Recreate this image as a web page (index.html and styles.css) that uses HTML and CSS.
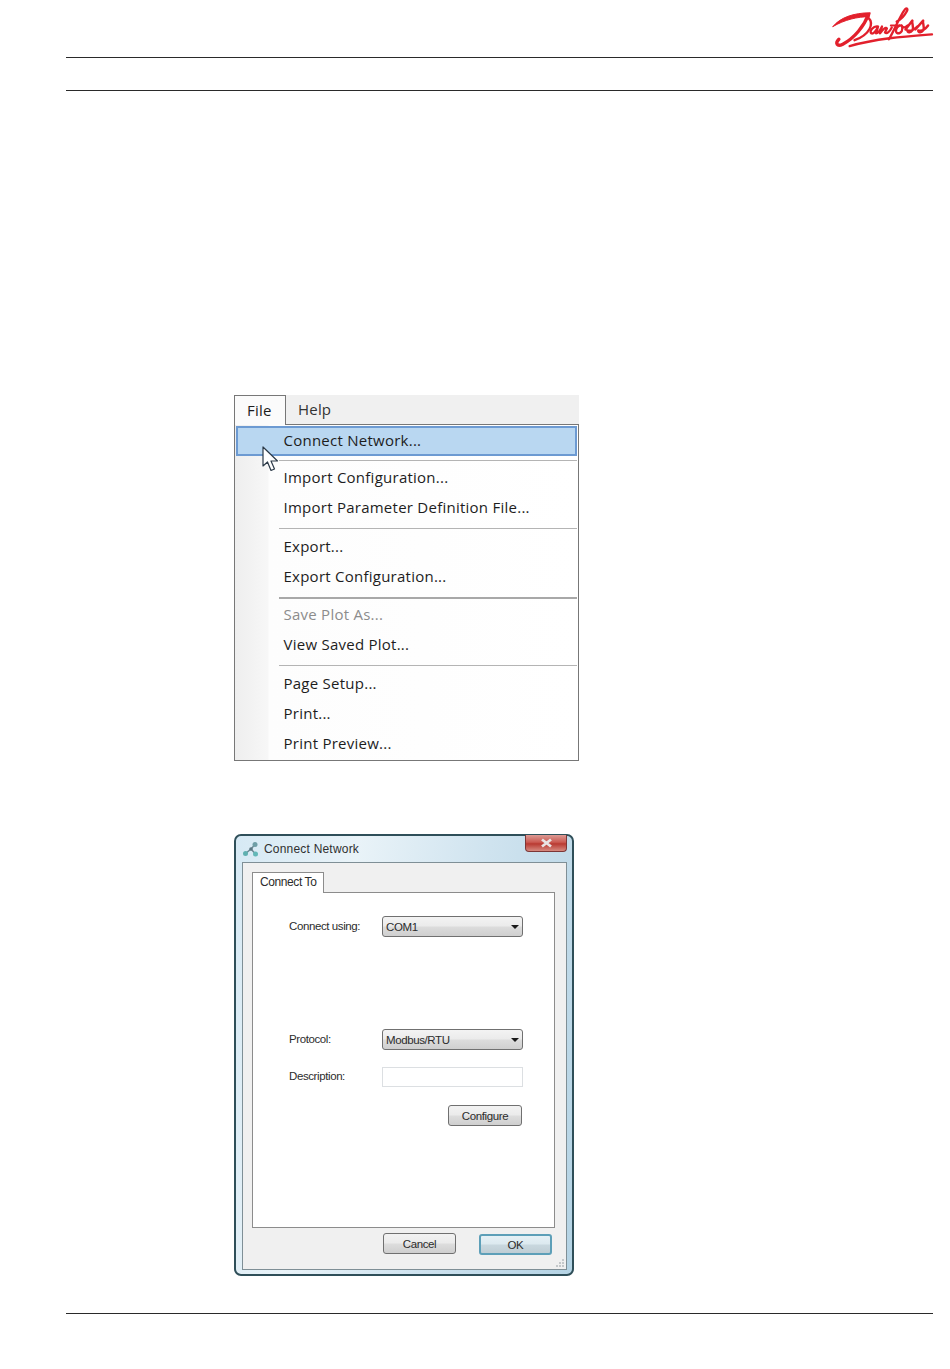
FILE: index.html
```html
<!DOCTYPE html>
<html lang="en">
<head>
<meta charset="utf-8">
<title>Connect Network</title>
<link rel="stylesheet" href="styles.css">
</head>
<body>
<div class="page">
  <header class="head">
    <svg class="logo" width="108" height="49" viewBox="0 0 110 50" fill="none" stroke="#e2202c" stroke-linecap="round" stroke-linejoin="round" role="img" aria-label="Danfoss logo">
      <path d="M5 25C12 16 26 11 43 11L42 15C30 15 17 18 5 25Z" fill="#e2202c" stroke-width="1"/>
      <path d="M41 13C37 24 27 37 15 43C9 46 7 42 11 38" stroke-width="3.400"/>
      <path d="M41 16C47 22 43 33 27 39" stroke-width="2.400"/>
      <path d="M22 45C50 37 80 35 106 33" stroke-width="2.400"/>
      <path d="M51 25C46 24 42 30 44 32C46 33 49 30 51 25L49 32C51 32 53 29 55 25L53 32C56 28 59 25 60 27L58 31C60 33 63 30 65 26" stroke-width="2.300"/>
      <path d="M62 38C67 30 73 15 78 8C80 5 82 7 80 10C78 14 74 18 70 20" stroke-width="2.400"/>
      <path d="M64 24H75" stroke-width="2"/>
      <path d="M73 24C69 26 68 31 71 32C75 32 77 28 75 24C77 27 79 26 81 24" stroke-width="2.300"/>
      <path d="M79 28L86 19C85 22 88 25 86 29C84 32 81 31 81 29C84 30 88 28 91 25" stroke-width="2.500"/>
      <path d="M89 28L97 19C96 22 99 25 97 29C95 32 92 31 92 29C95 30 99 28 102 24" stroke-width="2.500"/>
    </svg>
  </header>
  <div class="band"></div>

  <section class="menu-shot">
    <div class="menubar">
      <span class="menubar-file">File</span>
      <span class="menubar-help">Help</span>
    </div>
    <div class="menu-body">
      <div class="item item-active">Connect Network...</div>
      <div class="sep sep-first"></div>
      <div class="item">Import Configuration...</div>
      <div class="item">Import Parameter Definition File...</div>
      <div class="sep"></div>
      <div class="item">Export...</div>
      <div class="item">Export Configuration...</div>
      <div class="sep sep-strong"></div>
      <div class="item item-off">Save Plot As...</div>
      <div class="item">View Saved Plot...</div>
      <div class="sep"></div>
      <div class="item">Page Setup...</div>
      <div class="item">Print...</div>
      <div class="item">Print Preview...</div>
    </div>
    <svg class="cursor" width="18" height="26" viewBox="0 0 18 26">
      <path d="M1 1V20L5.500 16L9 24.500L12.500 23L9 15H15.500Z" fill="#fff" stroke="#2c3a48" stroke-width="1.200" stroke-linejoin="round"/>
    </svg>
  </section>

  <section class="dialog">
    <div class="titlebar">
      <div class="title">
        <svg width="17" height="16" viewBox="0 0 17 16" fill="none">
          <path d="M3.500 12.500L9 8L13 3.500M9 8L13.500 13" stroke="#6d8893" stroke-width="1.500"/>
          <circle cx="3.500" cy="12.500" r="2.500" fill="#5fb0b0"/>
          <circle cx="13" cy="3.500" r="2.500" fill="#6f9ea6"/>
          <circle cx="13.500" cy="13" r="2.500" fill="#63b8b8"/>
          <circle cx="9" cy="8" r="1.800" fill="#5b7682"/>
        </svg>
        <span>Connect Network</span>
      </div>
      <div class="close">
        <svg width="13" height="10" viewBox="0 0 13 10">
          <path d="M2 1.500L11 8.500M11 1.500L2 8.500" stroke="#e9e4e4" stroke-width="2.800"/>
        </svg>
      </div>
    </div>
    <div class="client">
      <div class="tab">Connect To</div>
      <div class="tabpanel">
        <div class="row">
          <span class="label">Connect using:</span>
          <div class="combo"><span>COM1</span><i class="arrow"></i></div>
        </div>
        <div class="row row-protocol">
          <span class="label">Protocol:</span>
          <div class="combo"><span>Modbus/RTU</span><i class="arrow"></i></div>
        </div>
        <div class="row row-desc">
          <span class="label">Description:</span>
          <div class="field"></div>
        </div>
        <div class="row-configure">
          <div class="btn btn-configure">Configure</div>
        </div>
      </div>
      <div class="actions">
        <div class="btn btn-cancel">Cancel</div>
        <div class="btn btn-ok">OK</div>
      </div>
      <svg class="grip" width="10" height="10" viewBox="0 0 10 10" fill="#c4c8ca">
        <rect x="7" y="1" width="2" height="2"/><rect x="4" y="4" width="2" height="2"/><rect x="7" y="4" width="2" height="2"/>
        <rect x="1" y="7" width="2" height="2"/><rect x="4" y="7" width="2" height="2"/><rect x="7" y="7" width="2" height="2"/>
      </svg>
    </div>
  </section>

  <footer class="foot"></footer>
</div>
</body>
</html>
```
FILE: styles.css
```css
html, body {
  margin: 0;
  padding: 0;
  background: #fff;
}

.page {
  width: 950px;
  height: 1369px;
  overflow: hidden;
  display: flex;
  flex-direction: column;
  font-family: "Liberation Sans", Arial, sans-serif;
  color: #1d1d1d;
}

.page > * {
  flex: none;
}

.head {
  margin: 0 17px 0 66px;
  height: 57px;
  border-bottom: 1px solid #2a2a2a;
  display: flex;
  justify-content: flex-end;
  align-items: flex-start;
}

.logo {
  margin: 2px -3px 0 0;
}

.band {
  margin: 0 17px 0 66px;
  height: 32px;
  border-bottom: 1px solid #2a2a2a;
}

/* File menu */
.menu-shot {
  position: relative;
  margin: 304px 0 0 234px;
  width: 345px;
  height: 366px;
  box-sizing: border-box;
  display: flex;
  flex-direction: column;
  font-family: "Open Sans", "Liberation Sans", sans-serif;
}

.menubar {
  height: 29px;
  flex: none;
  background: #f0f0f0;
  display: flex;
  align-items: stretch;
  font-size: 15px;
  letter-spacing: 0.2px;
}

.menubar-file {
  width: 52px;
  margin-bottom: -1px;
  position: relative;
  z-index: 1;
  box-sizing: border-box;
  background: #fbfbfb;
  border: 1px solid #777;
  border-bottom: 0;
  padding: 4px 0 0 12px;
}

.menubar-help {
  padding: 4px 0 0 12px;
  color: #333;
}

.menu-body {
  flex: 1;
  box-sizing: border-box;
  border: 1px solid #777;
  padding: 1px 1px 0;
  background: linear-gradient(90deg, #eeeeee 0, #f7f7f7 33px, #fdfdfd 34px, #fff 100%);
  font-size: 15px;
  letter-spacing: 0.25px;
}

.item {
  height: 30px;
  line-height: 28px;
  padding-left: 47.500px;
  box-sizing: border-box;
  white-space: nowrap;
}

.item-active {
  height: 30px;
  line-height: 24px;
  background: #b9d7f1;
  border: 2px solid #6c9ad2;
  padding-left: 45.500px;
}

.item-off {
  color: #8c8c8c;
}

.sep {
  height: 1px;
  margin: 5px 0 3px 43px;
  background: #b4b4b4;
}

.sep-first {
  margin-top: 4px;
  margin-bottom: 2px;
}

.sep-strong {
  height: 2px;
  margin-bottom: 1px;
  background: #a8a8a8;
}

.cursor {
  position: absolute;
  left: 28px;
  top: 51px;
}

/* Connect Network dialog */
.dialog {
  position: relative;
  margin: 73px 0 0 234px;
  width: 340px;
  height: 442px;
  box-sizing: border-box;
  border: 2px solid #2f4f59;
  border-radius: 7px;
  padding: 0 5px 4px 6px;
  background: linear-gradient(100deg, #d6e9f4 0, #e9f3f8 30%, #cfe3ef 62%, #b4d3e4 100%);
  display: flex;
  flex-direction: column;
  font-size: 11.500px;
  letter-spacing: -0.4px;
  color: #2c2c2c;
}

.titlebar {
  flex: none;
  height: 26px;
  display: flex;
  justify-content: space-between;
  align-items: flex-start;
}

.title {
  display: flex;
  align-items: center;
  gap: 5px;
  margin-top: 5px;
  font-size: 12px;
  letter-spacing: 0.2px;
  color: #303030;
}

.close {
  width: 42px;
  height: 17px;
  margin-top: -1px;
  box-sizing: border-box;
  border: 1px solid #7c3636;
  border-top: 0;
  border-radius: 0 0 4px 4px;
  background: linear-gradient(180deg, #dc9a94 0, #cb5a52 45%, #b93a32 55%, #d68a80 100%);
  display: flex;
  align-items: center;
  justify-content: center;
}

.client {
  position: relative;
  flex: 1;
  box-sizing: border-box;
  border: 1px solid #7f8f96;
  background: #f0f0f0;
  padding: 9px 11px 0 9px;
  display: flex;
  flex-direction: column;
}

.tab {
  align-self: flex-start;
  width: 72px;
  height: 21px;
  margin-bottom: -1px;
  position: relative;
  z-index: 1;
  box-sizing: border-box;
  background: #fff;
  border: 1px solid #8c8c8c;
  border-bottom: 0;
  padding: 2px 0 0 7px;
  font-size: 12px;
}

.tabpanel {
  flex: none;
  height: 336px;
  box-sizing: border-box;
  background: #fff;
  border: 1px solid #8c8c8c;
  padding: 23px 0 0 36px;
}

.row {
  display: grid;
  grid-template-columns: 93px 141px;
  align-items: center;
  height: 21px;
}

.row-protocol {
  margin-top: 92px;
}

.row-desc {
  margin-top: 17px;
  height: 20px;
}

.label {
  position: relative;
  top: -1px;
}

.combo {
  height: 21px;
  box-sizing: border-box;
  border: 1px solid #707070;
  border-radius: 3px;
  background: linear-gradient(180deg, #f3f3f3 0, #ebebeb 48%, #dcdcdc 52%, #cfcfcf 100%);
  display: flex;
  align-items: center;
  justify-content: space-between;
  padding: 1px 3px 0 3px;
}

.arrow {
  width: 0;
  height: 0;
  border-left: 4px solid transparent;
  border-right: 4px solid transparent;
  border-top: 4px solid #1a1a1a;
}

.field {
  height: 20px;
  box-sizing: border-box;
  border: 1px solid #dcdfe2;
  background: #fff;
}

.row-configure {
  margin-top: 18px;
  padding-left: 159px;
}

.btn {
  height: 21px;
  box-sizing: border-box;
  border: 1px solid #707070;
  border-radius: 3px;
  background: linear-gradient(180deg, #f2f2f2 0, #ebebeb 48%, #dddddd 52%, #cfcfcf 100%);
  display: flex;
  align-items: center;
  justify-content: center;
}

.btn-configure {
  width: 74px;
}

.actions {
  display: flex;
  align-items: flex-start;
  gap: 23px;
  padding: 5px 0 0 131px;
}

.btn-cancel {
  width: 73px;
}

.btn-ok {
  width: 73px;
  margin-top: 1px;
  border: 2px solid #5d9fb8;
  background: linear-gradient(180deg, #e6f1f6 0, #dce9ef 48%, #c9d8df 52%, #bfcdd4 100%);
}

.grip {
  position: absolute;
  right: 1px;
  bottom: 1px;
}

.foot {
  margin: 37px 17px 0 66px;
  border-top: 1px solid #2a2a2a;
}
```
